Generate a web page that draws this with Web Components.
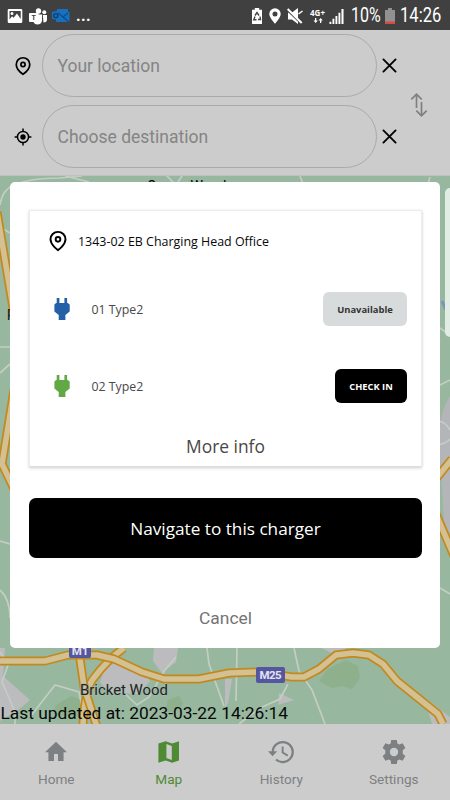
<!DOCTYPE html>
<html lang="en">
<head>
<meta charset="utf-8">
<title>Charging map</title>
<style>
html,body{margin:0;height:100%}
body{width:450px;height:800px;overflow:hidden;font-family:Roboto,sans-serif;background:#ccc}
</style>
</head>
<body>
<charger-app></charger-app>
<script>
const define = (name, css, html) => customElements.define(name, class extends HTMLElement {
  constructor() {
    super();
    const t = document.createElement('template');
    const body = typeof html === 'function' ? html(this) : html;
    t.innerHTML = `<style>:host{display:block;box-sizing:border-box}*{box-sizing:border-box}svg{display:block;flex:none}${css}</style>${body}`;
    this.attachShadow({mode: 'open'}).append(t.content.cloneNode(true));
  }
});

const icons = {
  pin: ['0 0 24 24', '<g fill="none" stroke="#000" stroke-width="2.3"><path d="M21 10c0 7-9 13-9 13S3 17 3 10a9 9 0 0 1 18 0z"/><circle cx="12" cy="10" r="2.8"/></g>'],
  target: ['0 0 24 24', '<g fill="none" stroke="#000" stroke-width="2"><circle cx="12" cy="12" r="7.4"/><path d="M12 .8v4M12 19.2v4M.8 12h4M19.2 12h4"/></g><circle cx="12" cy="12" r="3.6"/>'],
  close: ['0 0 16 16', '<path d="M1.5 1.5l13 13M14.5 1.5l-13 13" fill="none" stroke="#000" stroke-width="2" stroke-linecap="round"/>'],
  swap: ['0 0 18 26', '<path d="M6.5 16V2.2M1.3 7.4L6.5 2.2l5.2 5.2M11.5 10v13.500M6.3 18.6l5.2 5.2 5.2-5.2" fill="none" stroke="#808080" stroke-width="1.700"/>'],
  plug: ['0 0 16 24', '<path d="M2.700 1h2.700v5h5V1h2.700v5h.6L15.700 7.600v7L11.400 18v5H4.700v-5L.4 14.600v-7L2.100 6h.6z" fill="currentColor"/>'],
  home: ['0 0 24 24', '<path d="M10 21v-7h4v7h5.6v-8.8H23L12 1.8 1 12.2h3.4V21z" fill="currentColor"/>'],
  map: ['0 0 24 24', '<path d="M22 1.2l-6.8 2.2L8.6 1.2 1.4 3.5v19.3l7.2-2.3 6.6 2.3 6.8-2.3zM9.4 4.1l5.4 1.8v14L9.4 18z" fill="currentColor" fill-rule="evenodd"/>'],
  history: ['0 0 26 24', '<path d="M4.7 12A10 10 0 1 1 8 19.5" fill="none" stroke="currentColor" stroke-width="2.3"/><path d="M0 11.2h9.2L4.6 16.2zM13.7 6.5h1.9V12l4.6 2.8-.9 1.6-5.6-3.4z" fill="currentColor"/>'],
  gear: ['0 0 24 24', '<path fill="currentColor" fill-rule="evenodd" d="M9.2 0h5.6l.6 3.4 1.9 1.1 3.3-1.3 2.8 4.9-2.7 2.1v3.6l2.7 2.1-2.8 4.9-3.3-1.3-1.9 1.1-.6 3.4H9.2l-.6-3.4-1.9-1.1-3.3 1.3L.6 15.9l2.7-2.1v-3.6L.6 8.1l2.8-4.9 3.3 1.3 1.9-1.1zM12 7.8a4.2 4.2 0 1 0 0 8.4 4.2 4.2 0 0 0 0-8.4z"/>'],
  picture: ['0 0 16 16', '<path fill="#fff" fill-rule="evenodd" d="M2 1h12q1.3 0 1.3 1.3v11.4q0 1.3-1.3 1.3H2Q.7 15 .7 13.7V2.300Q.7 1 2 1zM2.500 3v8.500l2.500-3.200 1.600 1.500 3.400-4.300 3.700 5.500V3zM5 4a1.500 1.500 0 1 1 0 3 1.500 1.500 0 0 1 0-3z"/>'],
  battery: ['0 0 12 16', '<path fill="#fff" d="M3.800 0h4.400v1.700H11V16H1V1.700h2.800z"/><path fill="none" stroke="#444" stroke-width="1.400" d="M4 7.500l2-3 2 3M9 8.500l.5 3H7M5.500 11.700H2.800L4 8.600"/>'],
  place: ['0 0 12 16', '<path fill="#fff" fill-rule="evenodd" d="M6 .3a5.700 5.700 0 0 1 5.700 5.700c0 3.700-5.700 9.700-5.700 9.700S.3 9.700.3 6A5.700 5.700 0 0 1 6 .3zm0 3.200a2.500 2.500 0 1 0 0 5 2.500 2.500 0 0 0 0-5z"/>'],
  mute: ['0 0 16 16', '<path fill="#fff" d="M1 4.500h4L11 0v16L5 11.500H1z"/><path d="M.8 2.500l14 13.500" stroke="#404040" stroke-width="2"/><path d="M.7 1l14 14" stroke="#fff" stroke-width="2"/><path d="M11.500 6L15.500 3" stroke="#fff" stroke-width="1.500"/>'],
  signal: ['0 0 15 16', '<path fill="#fff" d="M0 13.500h2V16H0zM3.200 10.500h2V16h-2zM6.400 7.500h2V16h-2zM9.600 4h2v12h-2zM12.800 0H15v16h-2.200z"/>'],
  low: ['0 0 10 16', '<path fill="#919191" d="M3 0h4v2h3v14H0V2h3z"/><path fill="#db4a40" d="M0 13.500h10V16H0z"/>'],
  arrows: ['0 0 10 5', '<path fill="#fff" d="M2 0h1.300v2.500h1.500L2.650 5 .5 2.500H2zM7 5h1.300V2.500h1.500L7.650 0 5.500 2.500H7z"/>'],
  outlook: ['0 0 18 16', '<path fill="#1670bd" d="M5 1h11v3h1.500v10H4v-2.500L0 11V4l5-1z"/><path d="M6 5l5 4 5-4M11 9l6 5" fill="none" stroke="#0f4c86" stroke-width="1.200"/><circle cx="3.800" cy="7.700" r="2" fill="none" stroke="#0c3c70" stroke-width="1.300"/>'],
};
customElements.define('app-icon', class extends HTMLElement {
  connectedCallback() {
    const [box, art] = icons[this.getAttribute('name')];
    this.attachShadow({mode: 'open'}).innerHTML =
      `<style>:host{display:block;flex:none}svg{display:block}</style><svg width="${this.getAttribute('w')}" height="${this.getAttribute('h')}" viewBox="${box}">${art}</svg>`;
  }
});

define('teams-icon', ':host{flex:none}', `<svg width="19" height="17" viewBox="0 0 19 17"><g fill="#fff"><circle cx="9.500" cy="3" r="2.700"/><circle cx="15.300" cy="4.300" r="2"/><path d="M13.800 7H18v5q-.5 2.500-3.500 2.500zM6 6.500h7V13q-1 3.500-4.500 3.500-3 0-4-2.500z"/><rect y="5" width="9.500" height="9" rx="1"/></g><text x="4.700" y="12" text-anchor="middle" font-family="Roboto,sans-serif" font-weight="700" font-size="7" fill="#404040">T</text></svg>`);

define('status-bar', `
:host{height:30px;background:#404040;color:#fff;display:flex;align-items:center;padding:2px 8px 0 7px;justify-content:space-between}
div{display:flex;align-items:center}.dots{font:700 16px/16px Roboto,sans-serif;letter-spacing:.4px;margin-left:6px}
.net{flex-direction:column;font:700 8px/8px "Open Sans",sans-serif;width:17px;margin-left:6px;gap:1px}
.t{font-size:19.500px;line-height:24px;white-space:nowrap}
.pct{width:30px;margin-left:7px}.pct span{transform:scaleX(.82);transform-origin:0 50%}.time{width:42px;margin-left:5px}.time span{transform:scaleX(.85);transform-origin:0 50%}
`, `
<div><app-icon name="picture" w="16" h="16"></app-icon><teams-icon style="margin-left:6px"></teams-icon><app-icon name="outlook" w="18" h="16" style="margin-left:4px"></app-icon><span class="dots">...</span></div>
<div><app-icon name="battery" w="12" h="16"></app-icon><app-icon name="place" w="12" h="16" style="margin-left:6px"></app-icon><app-icon name="mute" w="16" h="16" style="margin-left:6px"></app-icon>
<div class="net"><span>4G+</span><app-icon name="arrows" w="10" h="5"></app-icon></div><app-icon name="signal" w="15" h="15" style="margin-left:3px"></app-icon>
<div class="t pct"><span>10%</span></div><app-icon name="low" w="10" h="16" style="margin-left:4px"></app-icon><div class="t time"><span>14:26</span></div></div>`);

define('place-field', `
:host{display:flex;align-items:center;height:63px}
.i{width:42px;display:flex;justify-content:center;padding-left:3px}
.f{width:335px;height:63px;border:1px solid #aaa;border-radius:32px;padding:1px 0 0 14.500px;line-height:61px;font-size:17.500px;color:#848484;white-space:nowrap}
.x{margin-left:5px}
`, el => `<div class="i"><app-icon name="${el.getAttribute('icon')}" w="18" h="20"></app-icon></div><div class="f"><slot></slot></div><app-icon class="x" name="close" w="15" h="15"></app-icon>`);

define('search-header', `
:host{height:146px;background:#ccc;padding:4px 0 0;display:grid;grid-template-columns:1fr 40px;border-bottom:1px solid #bdc2be}
.l{display:flex;flex-direction:column;gap:8px}.s{padding-top:58px}
`, `<div class="l"><slot></slot></div><div class="s"><app-icon name="swap" w="18" h="26"></app-icon></div>`);

define('map-view', `
:host{height:548px;position:relative;background:#97b79f;overflow:hidden}
.map{width:450px;height:548px}
.stamp{position:absolute;left:.5px;bottom:0;font-size:17.350px;line-height:22px;color:#080808;white-space:nowrap}
.panel{position:absolute;left:445px;top:12px;width:20px;height:149px;border-radius:5px;background:#e0ece4}
.over{position:absolute;left:10px;top:6px;width:430px}
`, () => {
  const road = d => `<path d="${d}" stroke="#c28a1e" stroke-width="9"/><path d="${d}" stroke="#d4c193" stroke-width="5.500"/>`;
  return `<svg class="map" viewBox="0 176 450 548">
<rect y="176" width="450" height="548" fill="#97b79f"/>
<path fill="#bcbcbe" d="M0 648h5l-2 28 27 24-13 11-17 10zM105 668l15-7 20 6 10 14-12 13-30-2-8-10zM154 648h24l-2 14-14 11-9-12zM225 679h7l-4 24-3 5zM279 693l15 7-16 5zM321 648h25l-5 6-9-1zM424 697l26 20v7h-18z"/>
<path fill="#b3b5b9" d="M450 396q-12 18-11 49l5 77 6 14z"/>
<path fill="#8eb08c" d="M319 681l9-12 18-9 12 6 2 12-8 11-10-3-10 2zM55 706l16-10 14 5 5 15H54zM168 700l11-4 4 8-8 8h-10z"/>
<g fill="none" stroke="#c4cdc5" stroke-width="1.700">
<path d="M0 205q2-15 14-20 16-7 46-7l22-2M65 176l24 6M166 175l10 10 6-9M300 176l3 8M430 177l-2 7M0 227l10 6M0 347h10M0 373l10-9M0 541l10 3M0 590q10 9 10 28M440 328l10 7M438 386l12-6M438 421q8 1 12 9M438 445q9-2 12-6M440 588l10 6"/>
<path d="M0 652l8 13-6 17 13 30v12M30 717l25-32 24 7 5 25M121 690l16 15 12-8 16-27 11-13M207 648l2 16 15 42M294 648l5 23 13 19 13 34M237 648l-1 53M288 684l-8 15-20 9-21 16"/>
</g>
<g fill="none" stroke-linejoin="round">
${road('M-3 212L5 260 15 320M14 390L2 464 15 491M452 459L435 480M436 514l18 42')}
${road('M124 648q-16 11-31 31-8 10-10 45')}
${road('M79 652l5 35 13 40')}
${road('M-3 661h48l23-6h29l17 4 28 13 22 7h35l30-6 30-1 33 5h12l15-8 17-14 17-2 16 2 14 9 14 17 41 33 5 10')}
</g>
<path d="M442 301l4 9" stroke="#7996b4" stroke-width="3"/>
<text x="147" y="191" font-family="Roboto,sans-serif" font-size="14">Queen Woods</text>
<text x="6.800" y="320" font-family="Roboto,sans-serif" font-size="15" fill="#222">P</text>
<rect x="69" y="640" width="22" height="18" rx="2" fill="#5556a0"/><rect x="256" y="667" width="29" height="16" rx="2" fill="#5556a0"/>
<g font-family="Roboto,sans-serif" text-anchor="middle"><g font-size="11.500" font-weight="700" fill="#e3e3ef"><text x="80" y="655">M1</text><text x="270.500" y="679" textLength="22">M25</text></g>
<text x="124" y="695" font-size="14.500" fill="#222" stroke="#a9bbae" stroke-width="1" paint-order="stroke" textLength="88" lengthAdjust="spacingAndGlyphs">Bricket Wood</text></g>
</svg><div class="panel"></div><div class="stamp">Last updated at: 2023-03-22 14:26:14</div><div class="over"><slot></slot></div>`;
});

define('charger-row', `
:host{display:flex;align-items:center;height:34px;padding:0 14px 0 24px;font-size:12.350px;color:#484848}
span{flex:1;margin-left:21.500px}
button{font:700 9.400px "Open Sans",sans-serif;height:34px;border:0;border-radius:6px;padding:0;width:84px;background:#d7dbdc;color:#333}
:host([open]) button{background:#000;color:#fff;width:72px;font-size:9.300px}
app-icon{color:#2460a8}:host([open]) app-icon{color:#62a845}
`, el => `<app-icon name="plug" w="16" h="24"></app-icon><span><slot></slot></span><button>${el.getAttribute('action')}</button>`);

define('charger-card', `
:host{height:257px;border:1px solid #ededed;border-bottom-color:#ddd;box-shadow:0 1px 3px #0003;padding-top:18px;display:flex;flex-direction:column}
.h{display:flex;align-items:center;height:24px;padding-left:18px;font-size:12.450px;color:#080808;gap:10px;margin-bottom:39px}
.rows{display:flex;flex-direction:column;gap:43px}.m{margin-top:31px;text-align:center;font-size:17.400px;line-height:24px;color:#484848}
`, `<div class="h"><app-icon name="pin" w="20" h="22"></app-icon><slot name="title"></slot></div><div class="rows"><slot></slot></div><div class="m">More info</div>`);

define('charger-dialog', `
:host{height:466px;background:#fff;border-radius:5px;padding:28px 18px 0 19px;font-family:"Open Sans",sans-serif;display:flex;flex-direction:column}
button{height:60px;margin-top:31px;border:0;border-radius:7px;background:#000;color:#fff;font:17.200px "Open Sans",sans-serif}
.c{margin-top:48px;text-align:center;font:17.400px/24px Roboto,sans-serif;color:#737373}
`, `<slot></slot><button>Navigate to this charger</button><div class="c">Cancel</div>`);

define('nav-item', `
:host{flex:1;display:flex;flex-direction:column;align-items:center;padding-top:16px;color:#7d8082;font-size:13.600px;line-height:18px;gap:6px}
:host([active]){color:#4f8a35}
`, el => `<app-icon name="${el.getAttribute('icon')}" w="${el.getAttribute('icon') === 'history' ? 26 : 24}" h="24"></app-icon><slot></slot>`);

define('bottom-nav', ':host{height:76px;background:#ccc;display:flex}', '<slot></slot>');

define('charger-app', ':host{width:450px;height:800px;display:flex;flex-direction:column;overflow:hidden}', `
<status-bar></status-bar>
<search-header><place-field icon="pin">Your location</place-field><place-field icon="target">Choose destination</place-field></search-header>
<map-view><charger-dialog><charger-card><span slot="title">1343-02 EB Charging Head Office</span>
<charger-row action="Unavailable">01 Type2</charger-row><charger-row open action="CHECK IN">02 Type2</charger-row></charger-card></charger-dialog></map-view>
<bottom-nav><nav-item icon="home">Home</nav-item><nav-item icon="map" active>Map</nav-item><nav-item icon="history">History</nav-item><nav-item icon="gear">Settings</nav-item></bottom-nav>`);
</script>
</body>
</html>
